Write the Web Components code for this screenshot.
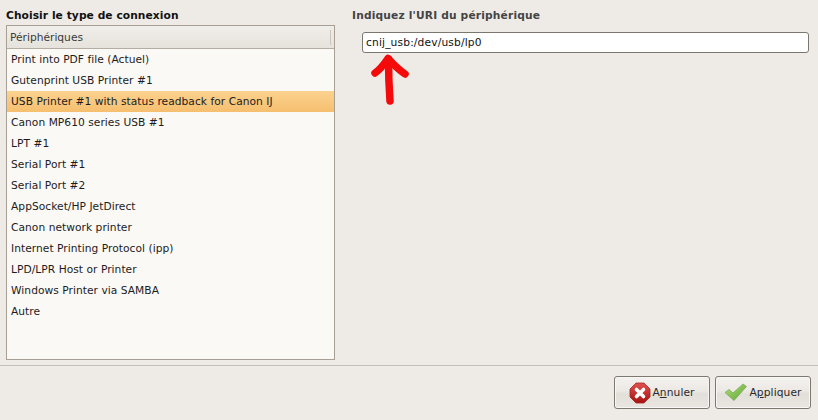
<!DOCTYPE html>
<html>
<head>
<meta charset="utf-8">
<title>Choisir le type de connexion</title>
<style>
  html, body { margin: 0; height: 100%; }
  body {
    width: 818px;
    height: 420px;
    overflow: hidden;
    background: #eeebe7;
    color: #1a1a1a;
    font: 10.67px "DejaVu Sans", sans-serif;
  }
</style>
</head>
<body>
<connection-dialog>
  <device-list slot="left" heading="Choisir le type de connexion" column="Périphériques">
    <device-row>Print into PDF file (Actuel)</device-row>
    <device-row>Gutenprint USB Printer #1</device-row>
    <device-row selected>USB Printer #1 with status readback for Canon IJ</device-row>
    <device-row>Canon MP610 series USB #1</device-row>
    <device-row>LPT #1</device-row>
    <device-row>Serial Port #1</device-row>
    <device-row>Serial Port #2</device-row>
    <device-row>AppSocket/HP JetDirect</device-row>
    <device-row>Canon network printer</device-row>
    <device-row>Internet Printing Protocol (ipp)</device-row>
    <device-row>LPD/LPR Host or Printer</device-row>
    <device-row>Windows Printer via SAMBA</device-row>
    <device-row>Autre</device-row>
  </device-list>
  <uri-panel slot="right" heading="Indiquez l'URI du périphérique" value="cnij_usb:/dev/usb/lp0"></uri-panel>
  <gtk-button slot="actions" icon="cancel"><span>A<u>n</u>nuler</span></gtk-button>
  <gtk-button slot="actions" icon="apply"><span>A<u>p</u>pliquer</span></gtk-button>
</connection-dialog>

<script>
  class ConnectionDialog extends HTMLElement {
    constructor() {
      super();
      this.attachShadow({mode: 'open'});
      this.shadowRoot.innerHTML = `
        <style>
          :host { display: flex; flex-direction: column; width: 818px; height: 420px; }
          .main { display: flex; height: 365px; box-sizing: border-box; padding: 9px 9px 5px 6px; }
          .left { display: block; width: 329px; flex: none; }
          .right { display: block; flex: 1; margin-left: 17px; }
          .actions {
            flex: 1;
            display: flex;
            justify-content: flex-end;
            gap: 5px;
            padding: 10px 7px 0 0;
            border-top: 1px solid #c4bfb7;
          }
        </style>
        <div class="main">
          <div class="left"><slot name="left"></slot></div>
          <div class="right"><slot name="right"></slot></div>
        </div>
        <div class="actions"><slot name="actions"></slot></div>
      `;
    }
  }

  class DeviceList extends HTMLElement {
    constructor() {
      super();
      this.attachShadow({mode: 'open'});
      this.shadowRoot.innerHTML = `
        <style>
          :host { display: flex; flex-direction: column; height: 351px; }
          h2 { margin: 0; height: 16px; font-size: 10.67px; line-height: 13px; font-weight: bold; color: #111; letter-spacing: .07px; }
          .box {
            flex: 1;
            border: 1px solid #a8a095;
            background: #fbf9f6;
            display: flex;
            flex-direction: column;
          }
          .head {
            height: 23px;
            box-sizing: border-box;
            padding: 0 3px;
            display: flex;
            align-items: center;
            background: linear-gradient(#f0eeea, #e6e2dc);
            border-bottom: 1px solid #b3ada4;
            color: #3a3a3a;
          }
          .head span { flex: 1; }
          .head i { width: 1px; height: 15px; background: #c9c4bc; }
        </style>
        <h2></h2>
        <div class="box">
          <div class="head"><span></span><i></i></div>
          <div class="rows"><slot></slot></div>
        </div>
      `;
      this.shadowRoot.querySelector('h2').textContent = this.getAttribute('heading');
      this.shadowRoot.querySelector('.head span').textContent = this.getAttribute('column');
    }
  }

  class DeviceRow extends HTMLElement {
    constructor() {
      super();
      this.attachShadow({mode: 'open'});
      this.shadowRoot.innerHTML = `
        <style>
          :host {
            display: flex;
            align-items: center;
            height: 21px;
            padding-left: 4px;
            color: #1c1c1c;
            letter-spacing: .04px;
          }
          :host([selected]) { background: linear-gradient(#fbd28f, #f6bf6f); }
        </style>
        <slot></slot>
      `;
    }
  }

  class UriPanel extends HTMLElement {
    constructor() {
      super();
      this.attachShadow({mode: 'open'});
      this.shadowRoot.innerHTML = `
        <style>
          :host { display: block; position: relative; }
          h2 { margin: 0 0 10px; height: 13px; font-size: 10.67px; line-height: 13px; font-weight: bold; color: #444; letter-spacing: .17px; }
          .entry {
            margin-left: 10px;
            height: 21px;
            box-sizing: border-box;
            border: 1px solid #7b766e;
            border-radius: 3px;
            background: #fff;
            padding: 0 3px;
            line-height: 19px;
            color: #111;
            letter-spacing: .15px;
          }
          svg { position: absolute; left: 16px; top: 44px; }
        </style>
        <h2></h2>
        <div class="entry"></div>
        <svg width="44" height="60" viewBox="0 0 44 60" fill="none" stroke="#f40a0a" stroke-width="7.500" stroke-linecap="round" stroke-linejoin="round">
          <path d="M20.500 6 C20.500 18 21 34 22 48"/>
          <path d="M7 20 C12 16.500 16 11.500 20 5.500 C26 12 31 17 37 21"/>
        </svg>
      `;
      this.shadowRoot.querySelector('h2').textContent = this.getAttribute('heading');
      this.shadowRoot.querySelector('.entry').textContent = this.getAttribute('value');
    }
  }

  const buttonIcons = {
    cancel: `<svg width="22" height="22" viewBox="0 0 22 22">
        <defs><linearGradient id="c" x1="0" y1="0" x2="0" y2="1"><stop offset="0" stop-color="#e0524e"/><stop offset="1" stop-color="#a81212"/></linearGradient></defs>
        <path d="M7 1h8l6 6v8l-6 6H7l-6-6V7z" fill="url(#c)" stroke="#a02a26" stroke-width=".8" stroke-linejoin="round"/>
        <path d="M7.500 7.500l7 7M14.500 7.500l-7 7" stroke="#fff" stroke-width="3.600" stroke-linecap="round"/>
      </svg>`,
    apply: `<svg width="24" height="22" viewBox="0 0 24 22">
        <defs><linearGradient id="a" x1="0" y1="0" x2="1" y2="1"><stop offset="0" stop-color="#b4e07a"/><stop offset="1" stop-color="#5aa52e"/></linearGradient></defs>
        <path d="M1 10.500L5 7.500L9 11L19 2L22.500 4.500L10 18.500z" fill="url(#a)" stroke="#7fa860" stroke-width=".8" stroke-linejoin="round"/>
      </svg>`
  };

  class GtkButton extends HTMLElement {
    constructor() {
      super();
      this.attachShadow({mode: 'open'});
      this.shadowRoot.innerHTML = `
        <style>
          :host {
            display: flex;
            align-items: center;
            justify-content: center;
            gap: 1px;
            width: 96px;
            height: 33px;
            box-sizing: border-box;
            border: 1px solid #7d7870;
            border-radius: 3px;
            background: linear-gradient(#f3f1ee 0%, #ece9e5 45%, #e2ded8 55%, #e9e6e1 100%);
            box-shadow: inset 0 0 0 1px #f7f6f4;
            color: #2a2a2a;
            letter-spacing: .1px;
          }
          svg { display: block; }
        </style>
        ${buttonIcons[this.getAttribute('icon')]}
        <slot></slot>
      `;
    }
  }

  customElements.define('connection-dialog', ConnectionDialog);
  customElements.define('device-list', DeviceList);
  customElements.define('device-row', DeviceRow);
  customElements.define('uri-panel', UriPanel);
  customElements.define('gtk-button', GtkButton);
</script>
</body>
</html>
